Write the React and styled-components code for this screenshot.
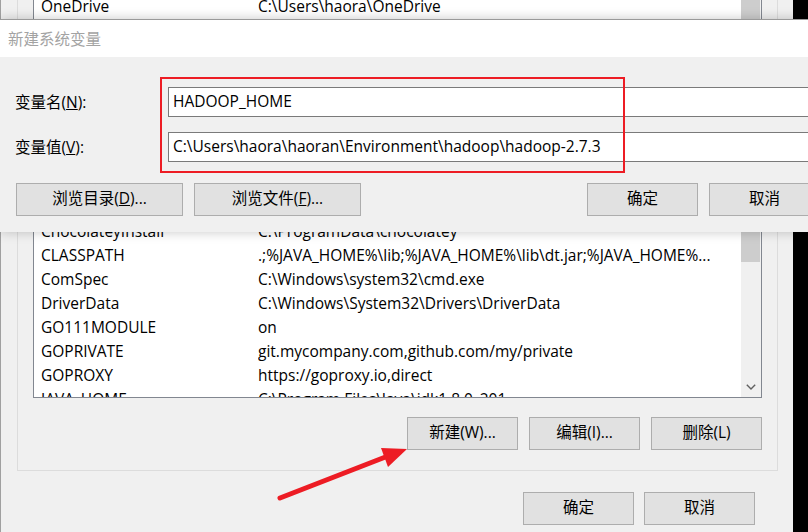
import React from "react";
import styled, { createGlobalStyle } from "styled-components";

const GlobalStyle = createGlobalStyle`
  html, body { margin: 0; padding: 0; background: #000; }
  body { font-family: "Open Sans", "Noto Sans CJK SC", sans-serif; }
`;

const Screen = styled.div`
  position: relative;
  width: 808px;
  height: 532px;
  overflow: hidden;
  background: #000;
  display: flex;
  font-family: "Open Sans", "Noto Sans CJK SC", sans-serif;
  font-size: 15.5px;
  color: #000;
`;

const Window = styled.div`
  box-sizing: border-box;
  width: 793px;
  height: 532px;
  flex: none;
  background: #f0f0f0;
  border-left: 1px solid #a0a0a0;
  display: flex;
  flex-direction: column;
`;

const Group = styled.div`
  box-sizing: border-box;
  margin: ${(p) => p.$mt || 0}px 15px 0 16px;
  border: 1px solid #dcdcdc;
  border-top-width: ${(p) => (p.$open ? 0 : 1)}px;
  border-bottom-width: ${(p) => (p.$open ? 0 : 1)}px;
  padding: ${(p) => (p.$open ? "0 15px" : "27px 15px 20px")};
  height: ${(p) => (p.$h ? `${p.$h}px` : "auto")};
  overflow: hidden;
  display: flex;
  flex-direction: column;
`;

const ListBox = styled.div`
  box-sizing: border-box;
  height: ${(p) => p.$h}px;
  background: #fff;
  border: 1px solid #828790;
  border-top-width: ${(p) => (p.$open ? 0 : 1)}px;
  border-bottom-width: ${(p) => (p.$open ? 0 : 1)}px;
  display: flex;
  overflow: hidden;
`;

const Rows = styled.div`
  flex: 1;
  min-width: 0;
  margin-top: ${(p) => p.$offset || 0}px;
`;

const Row = styled.div`
  display: grid;
  grid-template-columns: 217px 1fr;
  height: 24px;
  line-height: 24px;
  padding-left: 7px;
  white-space: nowrap;
`;

const Cell = styled.span`
  overflow: hidden;
  text-overflow: ellipsis;
  padding-right: 10px;
`;

const ScrollBar = styled.div`
  width: 20px;
  flex: none;
  background: #f0f0f0;
  display: flex;
  flex-direction: column;
`;

const Thumb = styled.div`
  height: ${(p) => p.$h}px;
  background: #cdcdcd;
  margin-right: 1px;
`;

const ArrowBtn = styled.div`
  margin-top: auto;
  height: 20px;
  display: flex;
  align-items: center;
  justify-content: center;
`;

const ButtonRow = styled.div`
  display: flex;
  justify-content: flex-end;
  gap: ${(p) => p.$gap || 11}px;
  margin-top: ${(p) => p.$mt || 0}px;
  padding-right: ${(p) => p.$pr || 0}px;
`;

const Button = styled.div`
  box-sizing: border-box;
  width: ${(p) => p.$w || 111}px;
  height: 33px;
  flex: none;
  background: #e1e1e1;
  border: 1px solid #adadad;
  display: flex;
  align-items: center;
  justify-content: center;
  white-space: nowrap;
  line-height: 1;
  padding-bottom: 1px;
`;

const Dialog = styled.div`
  position: absolute;
  top: 19px;
  left: 0;
  width: 836px;
  border-top: 1px solid #9a9a9a;
  box-shadow: 0 0 11px rgba(0, 0, 0, 0.22);
  display: flex;
  flex-direction: column;
`;

const TitleBar = styled.div`
  height: 37px;
  background: #fff;
  color: #a3a3a3;
  display: flex;
  align-items: center;
  padding-left: 8px;
`;

const DialogBody = styled.div`
  background: #f0f0f0;
  padding: 30px 16px 16px 15px;
  display: flex;
  flex-direction: column;
`;

const Form = styled.div`
  display: grid;
  grid-template-columns: 153px 1fr;
  grid-auto-rows: 30px;
  row-gap: 15px;
  align-items: center;
`;

const Label = styled.div`
  white-space: nowrap;
  padding-bottom: 2px;
`;

const Input = styled.div`
  box-sizing: border-box;
  height: 30px;
  background: #fff;
  border: 1px solid #7a7a7a;
  padding-left: 4px;
  display: flex;
  align-items: center;
  white-space: nowrap;
  padding-bottom: 2px;
`;

const DialogButtons = styled.div`
  display: flex;
  gap: 11px;
  margin-top: 21px;
  padding-left: 1px;
`;

const Spacer = styled.div`
  flex: 1;
`;

const Highlight = styled.div`
  position: absolute;
  box-sizing: border-box;
  top: 57px;
  left: 160px;
  width: 465px;
  height: 96px;
  border: 2px solid #ed1c24;
  pointer-events: none;
`;

const Arrow = styled.svg`
  position: absolute;
  left: 270px;
  top: 438px;
  width: 145px;
  height: 70px;
  pointer-events: none;
`;

const userRows = [["OneDrive", "C:\\Users\\haora\\OneDrive"]];

const systemRows = [
  ["ChocolateyInstall", "C:\\ProgramData\\chocolatey"],
  ["CLASSPATH", ".;%JAVA_HOME%\\lib;%JAVA_HOME%\\lib\\dt.jar;%JAVA_HOME%..."],
  ["ComSpec", "C:\\Windows\\system32\\cmd.exe"],
  ["DriverData", "C:\\Windows\\System32\\Drivers\\DriverData"],
  ["GO111MODULE", "on"],
  ["GOPRIVATE", "git.mycompany.com,github.com/my/private"],
  ["GOPROXY", "https://goproxy.io,direct"],
  ["JAVA_HOME", "C:\\Program Files\\Java\\jdk1.8.0_201"],
];

export default function App() {
  return (
    <>
      <GlobalStyle />
      <Screen>
        <Window>
          <Group $open $h={19}>
            <ListBox $open $h={19}>
              <Rows $offset={-6}>
                {userRows.map(([n, v]) => (
                  <Row key={n}>
                    <Cell>{n}</Cell>
                    <Cell>{v}</Cell>
                  </Row>
                ))}
              </Rows>
              <ScrollBar>
                <Thumb $h={19} />
              </ScrollBar>
            </ListBox>
          </Group>

          <Group $mt={171}>
            <ListBox $h={180}>
              <Rows>
                {systemRows.map(([n, v]) => (
                  <Row key={n}>
                    <Cell>{n}</Cell>
                    <Cell>{v}</Cell>
                  </Row>
                ))}
              </Rows>
              <ScrollBar>
                <Thumb $h={43} />
                <ArrowBtn>
                  <svg width="10" height="6" viewBox="0 0 10 6">
                    <path d="M0.8 0.8 L5 5 L9.2 0.8" fill="none" stroke="#606060" strokeWidth="1.4" />
                  </svg>
                </ArrowBtn>
              </ScrollBar>
            </ListBox>
            <ButtonRow $mt={19}>
              <Button>新建(W)...</Button>
              <Button>编辑(I)...</Button>
              <Button>删除(L)</Button>
            </ButtonRow>
          </Group>

          <ButtonRow $mt={21} $gap={10} $pr={38}>
            <Button>确定</Button>
            <Button>取消</Button>
          </ButtonRow>
        </Window>

        <Dialog>
          <TitleBar>新建系统变量</TitleBar>
          <DialogBody>
            <Form>
              <Label>
                变量名(<u>N</u>):
              </Label>
              <Input>HADOOP_HOME</Input>
              <Label>
                变量值(<u>V</u>):
              </Label>
              <Input>C:\Users\haora\haoran\Environment\hadoop\hadoop-2.7.3</Input>
            </Form>
            <DialogButtons>
              <Button $w={167}>
                浏览目录(<u>D</u>)...
              </Button>
              <Button $w={167}>
                浏览文件(<u>F</u>)...
              </Button>
              <Spacer />
              <Button>确定</Button>
              <Button>取消</Button>
            </DialogButtons>
          </DialogBody>
          <Highlight />
        </Dialog>

        <Arrow viewBox="0 0 145 70">
          <line x1="10" y1="60" x2="118" y2="18" stroke="#ed1c24" strokeWidth="5" strokeLinecap="round" />
          <polygon points="111,10 137,11 118,29" fill="#ed1c24" />
        </Arrow>
      </Screen>
    </>
  );
}
